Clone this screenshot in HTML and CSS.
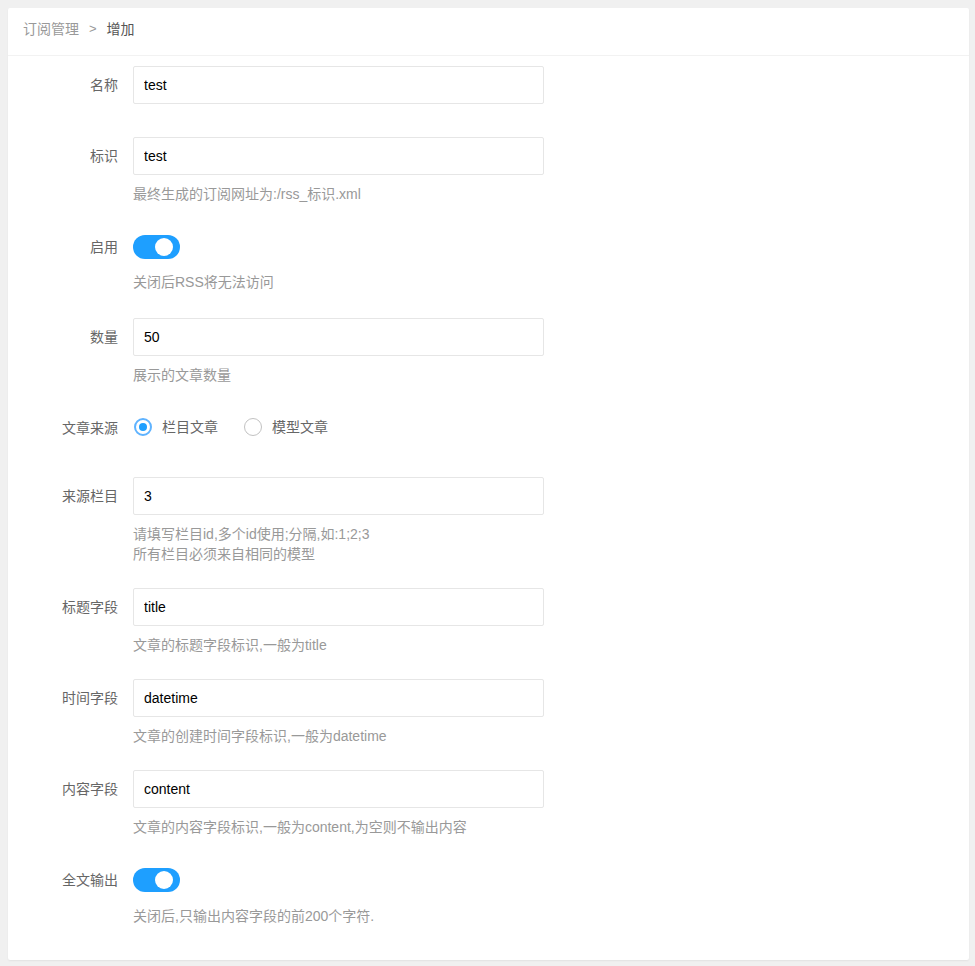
FILE: index.html
```html
<!DOCTYPE html>
<html lang="zh-CN">
<head>
<meta charset="utf-8">
<title>订阅管理 - 增加</title>
<link rel="stylesheet" href="styles.css">
</head>
<body>
<div class="card">
  <div class="card-header">
    <span class="crumb">订阅管理</span>
    <span class="crumb-sep">&gt;</span>
    <span class="crumb-current">增加</span>
  </div>
  <form class="form">
    <div class="item">
      <label class="label">名称</label>
      <div class="content"><input class="input" type="text" value="test"></div>
    </div>
    <div class="item has-help">
      <label class="label">标识</label>
      <div class="content">
        <input class="input" type="text" value="test">
        <div class="help">最终生成的订阅网址为:/rss_标识.xml</div>
      </div>
    </div>
    <div class="item has-help item-switch">
      <label class="label">启用</label>
      <div class="content">
        <div class="row"><span class="switch"><span class="knob"></span></span></div>
        <div class="help help-tight">关闭后RSS将无法访问</div>
      </div>
    </div>
    <div class="item has-help">
      <label class="label">数量</label>
      <div class="content">
        <input class="input" type="text" value="50">
        <div class="help">展示的文章数量</div>
      </div>
    </div>
    <div class="item item-radio">
      <label class="label">文章来源</label>
      <div class="content">
        <div class="row radio-row">
          <span class="radio checked"><span class="radio-dot"></span><span class="radio-text">栏目文章</span></span>
          <span class="radio"><span class="radio-dot"></span><span class="radio-text">模型文章</span></span>
        </div>
      </div>
    </div>
    <div class="item has-help">
      <label class="label">来源栏目</label>
      <div class="content">
        <input class="input" type="text" value="3">
        <div class="help">请填写栏目id,多个id使用;分隔,如:1;2;3<br>所有栏目必须来自相同的模型</div>
      </div>
    </div>
    <div class="item has-help">
      <label class="label">标题字段</label>
      <div class="content">
        <input class="input" type="text" value="title">
        <div class="help">文章的标题字段标识,一般为title</div>
      </div>
    </div>
    <div class="item has-help">
      <label class="label">时间字段</label>
      <div class="content">
        <input class="input" type="text" value="datetime">
        <div class="help">文章的创建时间字段标识,一般为datetime</div>
      </div>
    </div>
    <div class="item has-help">
      <label class="label">内容字段</label>
      <div class="content">
        <input class="input" type="text" value="content">
        <div class="help">文章的内容字段标识,一般为content,为空则不输出内容</div>
      </div>
    </div>
    <div class="item has-help last">
      <label class="label">全文输出</label>
      <div class="content">
        <div class="row"><span class="switch"><span class="knob"></span></span></div>
        <div class="help help-tight">关闭后,只输出内容字段的前200个字符.</div>
      </div>
    </div>
  </form>
</div>
</body>
</html>
```

FILE: styles.css
```css
html, body {
  margin: 0;
  padding: 0;
}
body {
  background: #f0f0f0;
  padding: 8px 6px 6px 8px;
  font-family: "Liberation Sans", "Noto Sans CJK SC", sans-serif;
  font-size: 14px;
  color: #333;
}
.card {
  background: #fff;
  border-radius: 2px;
  box-shadow: 0 1px 2px 0 rgba(0, 0, 0, 0.06);
}
.card-header {
  padding: 11px 15px 16px 15px;
  line-height: 20px;
  border-bottom: 1px solid #f2f2f2;
  display: flex;
  align-items: center;
}
.crumb {
  color: #999;
}
.crumb-sep {
  color: #999;
  margin: 0 10px;
  font-size: 13px;
}
.crumb-current {
  color: #555;
}
.form {
  padding: 10px 0 10px 0;
}
.item {
  display: flex;
  margin-bottom: 33px;
}
.item.has-help {
  margin-bottom: 24px;
}
.item.item-switch {
  margin-bottom: 26px;
}
.item.item-radio {
  margin-bottom: 30px;
}
.item.last {
  margin-top: 1px;
  margin-bottom: 24px;
}
.label {
  width: 110px;
  padding-right: 15px;
  text-align: right;
  line-height: 38px;
  color: #666;
  flex: none;
}
.content {
  flex: none;
  width: 411px;
}
.input {
  display: block;
  box-sizing: border-box;
  width: 411px;
  height: 38px;
  border: 1px solid #e6e6e6;
  border-radius: 2px;
  padding: 0 10px;
  font-family: inherit;
  font-size: 14px;
  color: #000;
  outline: none;
  margin: 0;
}
.help {
  margin-top: 9px;
  line-height: 20px;
  color: #999;
}
.help.help-tight {
  margin-top: 6px;
}
.item.last .help.help-tight {
  margin-top: 7px;
}
.row {
  height: 38px;
  display: flex;
  align-items: center;
}
.radio-row {
  height: 36px;
}
.switch {
  position: relative;
  display: inline-block;
  width: 47px;
  height: 24px;
  border-radius: 12px;
  background: #1e9fff;
}
.knob {
  position: absolute;
  top: 3px;
  right: 7px;
  width: 18px;
  height: 18px;
  border-radius: 50%;
  background: #fff;
}
.radio {
  display: inline-flex;
  align-items: center;
  margin-right: 25px;
  color: #666;
}
.radio-dot {
  position: relative;
  box-sizing: border-box;
  width: 18px;
  height: 18px;
  border-radius: 50%;
  border: 1px solid #c2c2c2;
  margin-left: 1px;
  margin-right: 10px;
}
.radio.checked .radio-dot {
  border: 2px solid #5fb3ff;
}
.radio.checked .radio-dot::after {
  content: "";
  position: absolute;
  left: 3px;
  top: 3px;
  width: 8px;
  height: 8px;
  border-radius: 50%;
  background: #1e9fff;
}
.radio-text {
  line-height: 20px;
}
```
